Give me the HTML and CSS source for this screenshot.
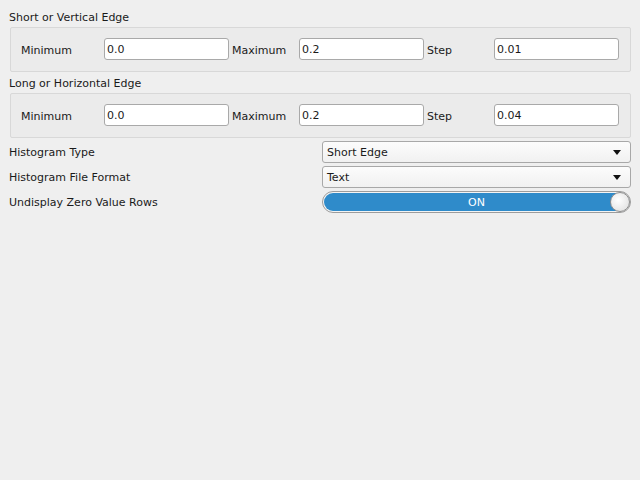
FILE: index.html
```html
<!DOCTYPE html>
<html>
<head>
<meta charset="utf-8">
<link rel="stylesheet" href="styles.css">
</head>
<body>
<div class="page">
  <div class="group-title">Short or Vertical Edge</div>
  <div class="group-box">
    <span class="lbl first">Minimum</span><div class="field">0.0</div>
    <span class="lbl">Maximum</span><div class="field">0.2</div>
    <span class="lbl">Step</span><div class="field">0.01</div>
  </div>
  <div class="group-title second">Long or Horizontal Edge</div>
  <div class="group-box">
    <span class="lbl first">Minimum</span><div class="field">0.0</div>
    <span class="lbl">Maximum</span><div class="field">0.2</div>
    <span class="lbl">Step</span><div class="field">0.04</div>
  </div>
  <div class="form">
    <span class="row-label">Histogram Type</span>
    <div class="combo"><span>Short Edge</span><span class="arrow"></span></div>
    <span class="row-label">Histogram File Format</span>
    <div class="combo"><span>Text</span><span class="arrow"></span></div>
    <span class="row-label">Undisplay Zero Value Rows</span>
    <div class="toggle"><div class="toggle-track">ON</div><span class="knob"></span></div>
  </div>
</div>
</body>
</html>
```
FILE: styles.css
```css
html, body {
  margin: 0;
  padding: 0;
  background: #efefef;
  width: 640px;
  height: 480px;
  overflow: hidden;
}
body {
  font-family: "DejaVu Sans", sans-serif;
  font-size: 11px;
  color: #1a1a1a;
}
.page {
  padding: 11px 9px 0 9px;
  width: 622px;
}
.group-title {
  height: 14px;
  line-height: 14px;
  margin-bottom: 2px;
}
.group-title.second {
  margin-top: 5px;
}
.group-box {
  margin-left: 1px;
  height: 22px;
  padding: 10px 0 11px 7px;
  border: 1px solid #d8d8d8;
  border-radius: 2px;
  background: #ebebeb;
  display: grid;
  grid-template-columns: 86px 125px 70px 125px 70px 125px;
  align-items: center;
}
.lbl {
  padding-left: 3px;
  padding-top: 2px;
}
.field {
  height: 20px;
  line-height: 22px;
  overflow: hidden;
  border: 1px solid #a9a9a9;
  border-radius: 3px;
  background: #ffffff;
  padding-left: 2px;
  box-sizing: content-box;
  width: 121px;
}
.form {
  margin-top: 3px;
  display: grid;
  grid-template-columns: 313px 309px;
  grid-auto-rows: 22px;
  row-gap: 3px;
  align-items: center;
}
.combo {
  height: 20px;
  border: 1px solid #a8a8a8;
  border-radius: 3px;
  background: linear-gradient(#fcfcfc, #f1f1f1);
  display: flex;
  align-items: center;
  justify-content: space-between;
  padding: 0 9px 0 4px;
}
.arrow {
  width: 0;
  height: 0;
  border-left: 4px solid transparent;
  border-right: 4px solid transparent;
  border-top: 5px solid #111;
}
.toggle {
  position: relative;
  height: 20px;
  border: 1px solid #9c9c9c;
  border-radius: 11px;
  background: #f4f4f4;
  padding: 0;
}
.toggle-track {
  position: absolute;
  left: 1px;
  right: 1px;
  top: 1px;
  bottom: 1px;
  border-radius: 9px;
  background: #2f8bca;
  color: #ffffff;
  text-align: center;
  line-height: 20px;
}
.knob {
  position: absolute;
  right: 0;
  top: 0;
  width: 18px;
  height: 18px;
  border-radius: 50%;
  border: 1px solid #8e8e8e;
  background: radial-gradient(circle at 40% 40%, #ffffff, #dcdcdc);
}
```
